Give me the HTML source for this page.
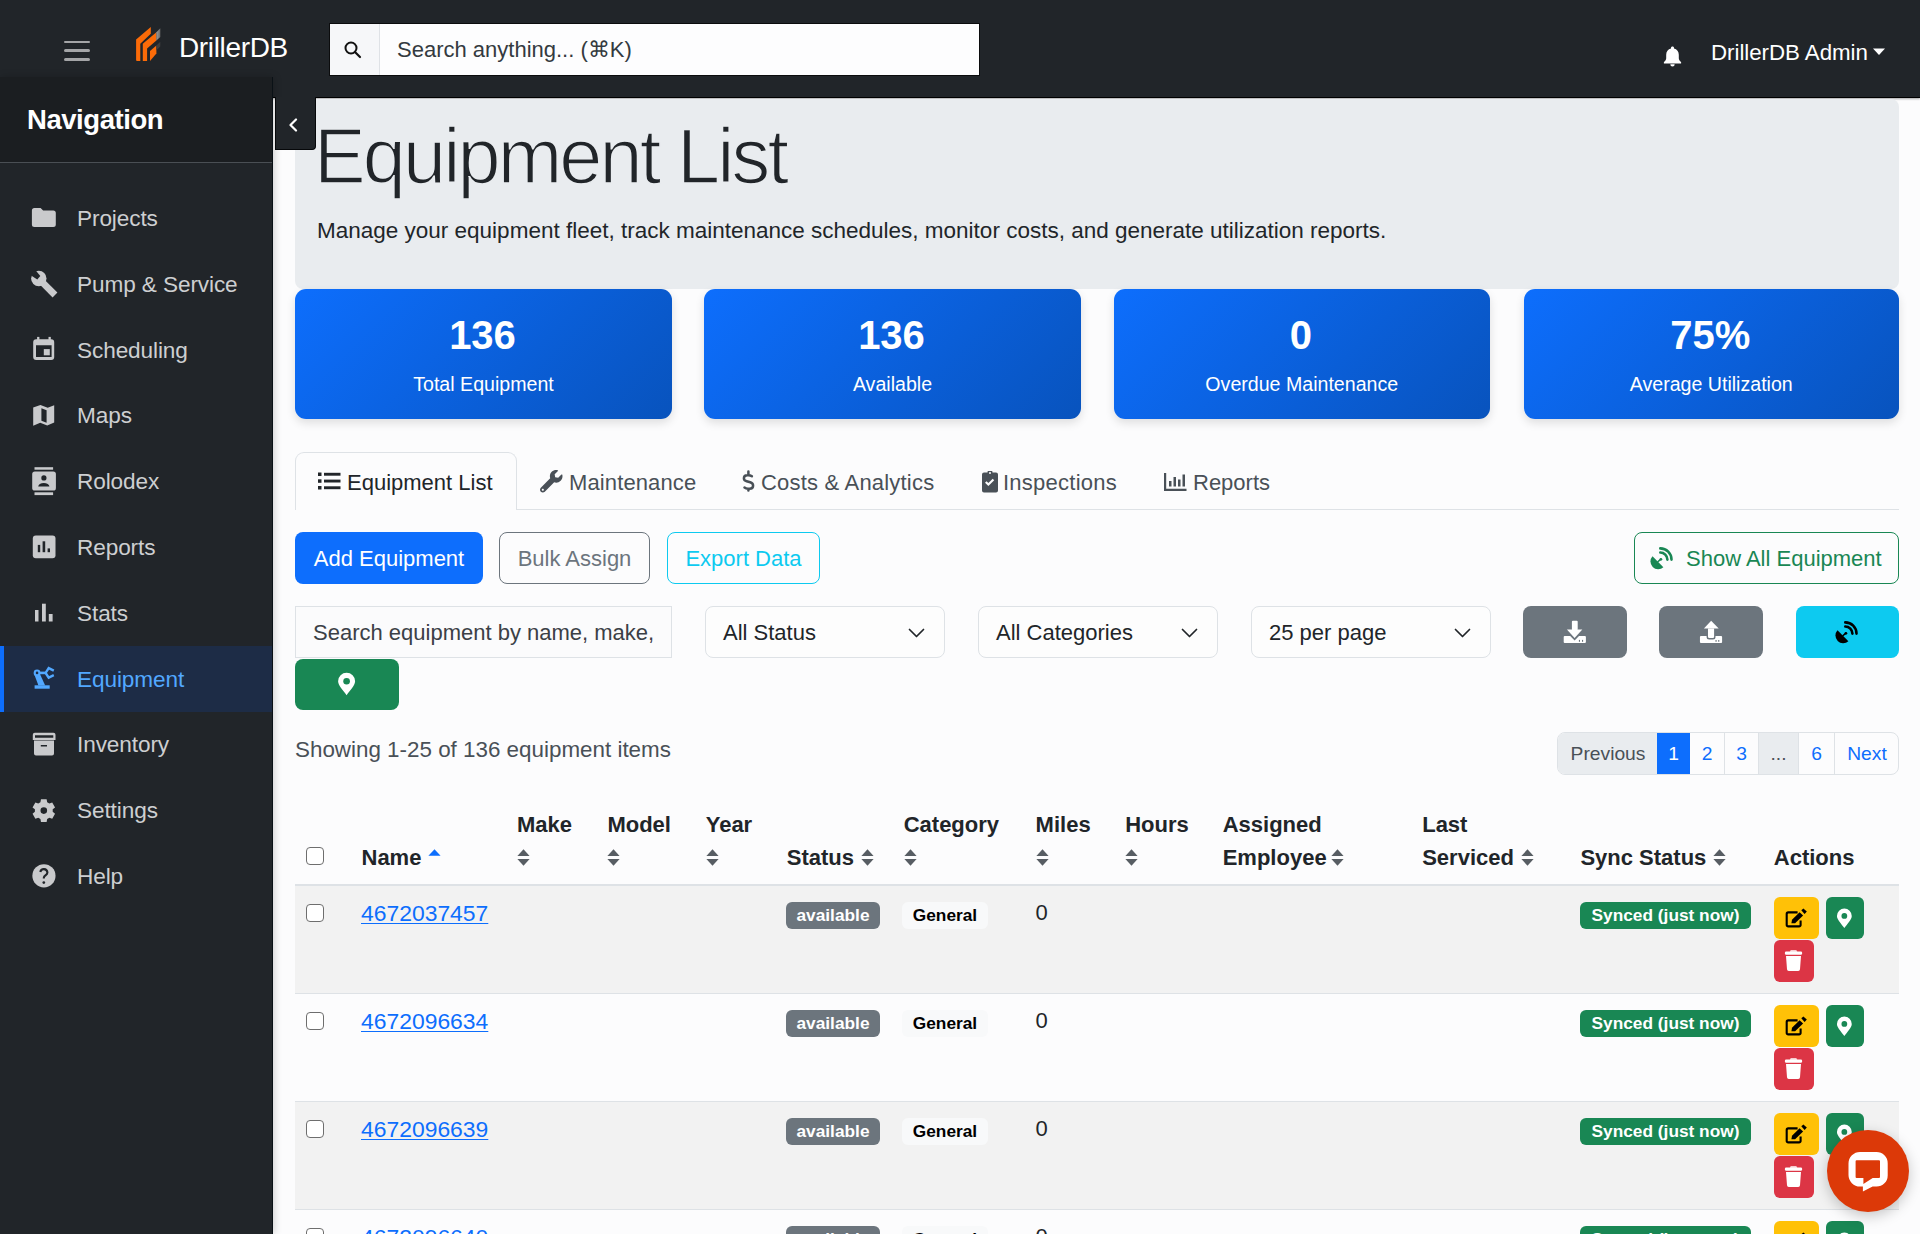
<!DOCTYPE html>
<html><head><meta charset="utf-8">
<style>
*{box-sizing:border-box;margin:0;padding:0}
html,body{width:1920px;height:1234px;overflow:hidden;background:#fcfcfd;font-family:"Liberation Sans",sans-serif;color:#212529}
.abs{position:absolute}
svg{display:block}
/* topbar */
#top{position:absolute;left:0;top:0;width:1920px;height:98px;background:#212529;border-bottom:1px solid #000;box-shadow:0 1px 2px rgba(0,0,0,.35)}
.hb{position:absolute;left:63.5px;width:26.5px;height:2.6px;border-radius:1.5px;background:#a4a5a7}
#brand{position:absolute;left:179px;top:30.5px;font-size:28px;line-height:34px;color:#fff;letter-spacing:-0.35px}
#sg{position:absolute;left:329px;top:23px;width:651px;height:53px;border:1px solid #0b0c0d;background:#fdfdfe}
#sg .ad{position:absolute;left:0;top:0;width:50px;height:51px;background:#f6f7f9;border-right:1px solid #dfe2e6}
#sg .ph{position:absolute;left:67px;top:11px;font-size:22px;line-height:30px;color:#343a40}
#user{position:absolute;left:1711px;top:38px;font-size:22.3px;line-height:30px;color:#fff;letter-spacing:-0.03px}
/* sidebar */
#side{position:absolute;left:0;top:77px;width:273px;height:1157px;background:#212529;border-right:1.5px solid #0a1116;box-shadow:1px 0 8px rgba(0,0,0,.2)}
#sidehead{position:absolute;left:0;top:0;width:271.5px;height:86px;background:#1b1e21;border-bottom:1px solid #4a4f54}
#sidehead div{position:absolute;left:27px;top:25.5px;font-size:27.5px;font-weight:bold;line-height:34px;color:#fff;letter-spacing:-0.45px}
.ni{position:absolute;left:0;width:271.5px;height:66px}
.ni .ic{position:absolute;left:31px;top:21px;width:26px;height:24px}
.ni .tx{position:absolute;left:77px;top:18.5px;font-size:22.6px;letter-spacing:-0.1px;line-height:30px;color:#cdcfd1}
.ni.act{background:#1d2c46;border-left:4px solid #0d6efd}
.ni.act .ic{left:27px}
.ni.act .tx{left:73px;color:#52a8ff}
#tog{position:absolute;left:275px;top:97px;width:41px;height:53px;background:#212529;border:1px solid #06080a;border-top:none;border-radius:0 0 4px 0}
/* jumbotron */
#jumbo{position:absolute;left:295px;top:99px;width:1604px;height:190px;background:#e9ecef;border-radius:8px}
#jt{position:absolute;left:19px;top:11.5px;font-size:77.5px;line-height:90px;letter-spacing:-2.9px;color:#212529;-webkit-text-stroke:1.6px #e9ecef}
#js{position:absolute;left:22px;top:116.5px;font-size:22.5px;line-height:30px;color:#212529}
.card{position:absolute;top:289px;height:130px;border-radius:11px;background:linear-gradient(135deg,#0d6efd 0%,#0853bd 100%);box-shadow:0 4px 10px rgba(0,0,0,.12);color:#fff;text-align:center}
.card .n{position:absolute;left:-2px;right:0;top:22.5px;font-size:40px;font-weight:bold;line-height:46px}
.card .l{position:absolute;left:0;right:0;top:82px;font-size:19.6px;line-height:26px}
/* tabs */
#tabline{position:absolute;left:295px;top:509px;width:1604px;height:1px;background:#dee2e6}
#acttab{position:absolute;left:295px;top:452px;width:222px;height:58px;border:1px solid #dee2e6;border-bottom:none;border-radius:9px 9px 0 0;background:#fcfcfd}
.tab{position:absolute;top:467.5px;font-size:22px;line-height:30px;color:#495057}
.tabic{position:absolute}
/* buttons */
.btn{position:absolute;height:52px;border-radius:8px;font-size:22px;line-height:51.5px;text-align:center;border:1px solid transparent}
.sel{position:absolute;top:606px;width:240px;height:52px;border:1px solid #dee2e6;border-radius:8px;background:#fdfdfd;font-size:22px;line-height:50px;color:#212529}
.sel span{position:absolute;left:17px;top:1px}
.sel svg{position:absolute;top:20.5px}
.th{position:absolute;font-size:22px;font-weight:bold;line-height:30px;color:#212529;white-space:nowrap}
.td{position:absolute;font-size:22px;line-height:30px;color:#212529}
.lk{position:absolute;font-size:22.9px;line-height:30px;color:#0d6efd;text-decoration:underline;text-underline-offset:2px;text-decoration-thickness:1px}
.cb{position:absolute;width:18px;height:18px;border:1px solid #6e6e6e;border-radius:4px;background:#fff}
.bdg{position:absolute;height:27px;border-radius:6px;font-size:17.3px;font-weight:bold;line-height:27px;text-align:center;white-space:nowrap}
.abtn{position:absolute;height:41.5px;border-radius:6px}
</style></head>
<body>
<div id="top">
  <div class="hb" style="top:40.6px"></div><div class="hb" style="top:49.4px"></div><div class="hb" style="top:58.3px"></div>
  <svg class="abs" style="left:120px;top:20px" width="50" height="50" viewBox="120 20 50 50">
    <defs><linearGradient id="g1" x1="0" y1="0" x2="1" y2="0"><stop offset="0" stop-color="#9a9a9a"/><stop offset="1" stop-color="#6a6a6a"/></linearGradient></defs>
    <path d="M136.1 60.2V39.5L150.8 27V33.8L140.3 43.7V60.9H137A1 1 0 0 1 136.1 60.2Z" fill="#fb6b08"/>
    <path d="M142.8 60.9V43.7L156.4 32.2V40.6L147.1 48.4V60.9Z" fill="#fb6b08"/>
    <path d="M156.4 32.2L160.3 28.3V37L156.4 40.6Z" fill="url(#g1)"/>
    <path d="M150 60.9V50.9L156.4 45.6V53.4Z" fill="#fb6b08"/>
    <path d="M156.4 45.6L160.3 41.8V46.5L156.4 50.3Z" fill="#3d3d3d"/>
  </svg>
  <div id="brand">DrillerDB</div>
  <div id="sg"><div class="ad">
    <svg class="abs" style="left:14px;top:17px" width="18" height="18" viewBox="0 0 18 18"><circle cx="7" cy="7" r="5.5" fill="none" stroke="#111" stroke-width="2"/><line x1="11" y1="11" x2="16" y2="16" stroke="#111" stroke-width="2.2" stroke-linecap="round"/></svg>
  </div><div class="ph">Search anything... (⌘K)</div></div>
  <svg class="abs" style="left:1663px;top:45px" width="19" height="22" viewBox="0 0 19 22"><path d="M9.5 1.5c.9 0 1.5.6 1.5 1.4v.6c3 .7 4.8 3.2 4.8 6.3v3.4c0 1.5.9 2.9 2.3 3.8v1.6H.9V17c1.4-.9 2.3-2.3 2.3-3.8V9.8c0-3.1 1.8-5.6 4.8-6.3v-.6c0-.8.6-1.4 1.5-1.4z" fill="#fff"/><path d="M7.3 19.2h4.4a2.2 2.2 0 0 1-4.4 0z" fill="#fff"/></svg>
  <div id="user">DrillerDB Admin</div>
  <svg class="abs" style="left:1873px;top:48px" width="12" height="8" viewBox="0 0 12 8"><polygon points="0,0.5 12,0.5 6,7" fill="#fff"/></svg>
</div>

<div id="side">
  <div id="sidehead"><div>Navigation</div></div>
  <!-- nav items inserted -->
  <div class="ni" style="top:108.4px"><div class="tx">Projects</div></div>
  <div class="ni" style="top:174.2px"><div class="tx">Pump &amp; Service</div></div>
  <div class="ni" style="top:240.0px"><div class="tx">Scheduling</div></div>
  <div class="ni" style="top:305.8px"><div class="tx">Maps</div></div>
  <div class="ni" style="top:371.6px"><div class="tx">Rolodex</div></div>
  <div class="ni" style="top:437.4px"><div class="tx">Reports</div></div>
  <div class="ni" style="top:503.2px"><div class="tx">Stats</div></div>
  <div class="ni act" style="top:569.0px"><div class="tx">Equipment</div></div>
  <div class="ni" style="top:634.8px"><div class="tx">Inventory</div></div>
  <div class="ni" style="top:700.6px"><div class="tx">Settings</div></div>
  <div class="ni" style="top:766.4px"><div class="tx">Help</div></div>
</div>


<div id="jumbo">
  <div id="jt">Equipment List</div>
  <div id="js">Manage your equipment fleet, track maintenance schedules, monitor costs, and generate utilization reports.</div>
</div>
<svg class="abs" style="left:0;top:0" width="273" height="1234" viewBox="0 0 273 1234">
<path fill="#c9cacc" d="M34.4 208.1H40.6L43.1 210.6H53.3A2.5 2.5 0 0 1 55.8 213.1V224.6A2.5 2.5 0 0 1 53.3 227.1H34.4A2.5 2.5 0 0 1 31.9 224.6V210.6A2.5 2.5 0 0 1 34.4 208.1Z"/>
<circle cx="38.8" cy="278.5" r="7.7" fill="#c9cacc"/>
<path fill="#c9cacc" d="M45.3 280.4L57.4 292.6L52.6 297.4L40.5 285.2Z"/>
<path fill="#212529" d="M35.6 270.3L40.3 275.9L37.3 279.5L30.3 275.1Z"/>
<path fill="#c9cacc" fill-rule="evenodd" d="M36.2 339.3H51.2A3 3 0 0 1 54.2 342.3V357A3 3 0 0 1 51.2 360H36.2A3 3 0 0 1 33.2 357V342.3A3 3 0 0 1 36.2 339.3ZM36 345.2V356.9H51.6V345.2Z"/>
<rect x="37.1" y="336.9" width="2.3" height="3" fill="#c9cacc"/><rect x="48.5" y="336.9" width="2.3" height="3" fill="#c9cacc"/>
<rect x="43.8" y="349.1" width="6" height="6.2" fill="#c9cacc"/>
<path fill="#c9cacc" fill-rule="evenodd" d="M33.2 407.5L40.45 405L47.7 407.8L54.2 405.2V422.6L47.2 425.5L40.2 422.8L33.2 425.7ZM41.4 408.2V420.8L46.6 422.8V410.3Z"/>
<rect x="34.5" y="467.2" width="18.6" height="2.5" fill="#c9cacc"/>
<rect x="34.5" y="492.3" width="18.6" height="2.8" fill="#c9cacc"/>
<rect x="32.2" y="471.5" width="23.7" height="19" rx="2.6" fill="#c9cacc"/>
<circle cx="43.9" cy="477.9" r="2.6" fill="#212529"/>
<path fill="#212529" d="M38.2 486.6A5.6 3.6 0 0 1 49.4 486.6Z"/>
<rect x="32.8" y="535.6" width="22.7" height="22.7" rx="3" fill="#c9cacc"/>
<rect x="37.8" y="544.9" width="2.4" height="7.3" fill="#212529"/><rect x="42.6" y="541.3" width="2.6" height="10.9" fill="#212529"/><rect x="47.6" y="548.4" width="2.4" height="3.8" fill="#212529"/>
<rect x="35" y="610" width="3.5" height="11.5" fill="#c9cacc"/><rect x="42" y="603.7" width="3.8" height="17.8" fill="#c9cacc"/><rect x="48.8" y="614" width="3.8" height="7.5" fill="#c9cacc"/>
<g transform="translate(30,662)">
<rect x="4.6" y="23.3" width="15.1" height="3.4" fill="#52a8ff"/>
<path fill="#52a8ff" d="M3.9 11.3L9.6 11.3L15.2 23.4L8.4 23.4Z"/>
<circle cx="7.05" cy="10.9" r="3.4" fill="#52a8ff"/>
<circle cx="7.05" cy="10.9" r="1.3" fill="#1d2c46"/>
<rect x="9.5" y="9.6" width="6" height="2.6" fill="#52a8ff"/>
<polyline points="23.8,8.6 18.7,6.1 15.6,10.9 18.7,15.6 23.8,13.2" fill="none" stroke="#52a8ff" stroke-width="2.4"/>
</g>
<path fill="#c9cacc" fill-rule="evenodd" d="M34.8 732.8H53.5A2 2 0 0 1 55.5 734.8V740H32.8V734.8A2 2 0 0 1 34.8 732.8ZM35 735.2V737.8H53.3V735.2Z"/>
<path fill="#c9cacc" fill-rule="evenodd" d="M34 740.6H54V753.5A2 2 0 0 1 52 755.5H36A2 2 0 0 1 34 753.5ZM40.8 745V746.6H47V745Z"/>
<path fill="#c9cacc" fill-rule="evenodd" d="M40.43 802.26 L40.97 799.25 L46.63 799.25 L47.17 802.26 L49.34 803.51 L52.22 802.47 L55.05 807.38 L52.71 809.35 L52.71 811.85 L55.05 813.82 L52.22 818.73 L49.34 817.69 L47.17 818.94 L46.63 821.95 L40.97 821.95 L40.43 818.94 L38.26 817.69 L35.38 818.73 L32.55 813.82 L34.89 811.85 L34.89 809.35 L32.55 807.38 L35.38 802.47 L38.26 803.51Z M47.10 810.60A3.3 3.3 0 1 0 40.50 810.60A3.3 3.3 0 1 0 47.10 810.60Z"/>
<circle cx="43.95" cy="875.8" r="11.6" fill="#c9cacc"/>
<path d="M40.3 872A3.6 3.6 0 0 1 47.4 872.4C47.4 874.6 45.4 875.2 44.3 876.5C43.9 877 43.8 877.6 43.8 878.6" fill="none" stroke="#212529" stroke-width="2.1"/>
<circle cx="43.8" cy="882.6" r="1.35" fill="#212529"/>
</svg>
<div id="tog"><svg class="abs" style="left:11px;top:21px" width="12" height="14" viewBox="0 0 12 14"><polyline points="9,1.5 3.5,7 9,12.5" fill="none" stroke="#fff" stroke-width="2.2" stroke-linecap="round" stroke-linejoin="round"/></svg></div>
<div class="card" style="left:295px;width:377px"><div class="n">136</div><div class="l">Total Equipment</div></div>
<div class="card" style="left:704px;width:377px"><div class="n">136</div><div class="l">Available</div></div>
<div class="card" style="left:1113.5px;width:376.5px"><div class="n">0</div><div class="l">Overdue Maintenance</div></div>
<div class="card" style="left:1523.5px;width:375.5px"><div class="n">75%</div><div class="l">Average Utilization</div></div>

<!-- tabs -->
<div id="tabline"></div>
<div id="acttab"></div>
<svg class="abs" style="left:318px;top:472px" width="23" height="18" viewBox="0 0 23 18" fill="#212529"><rect x="0" y="0.5" width="3.5" height="3.5"/><rect x="0" y="7.3" width="3.5" height="3.5"/><rect x="0" y="14" width="3.5" height="3.5"/><rect x="6" y="0.8" width="16.5" height="2.9"/><rect x="6" y="7.6" width="16.5" height="2.9"/><rect x="6" y="14.3" width="16.5" height="2.9"/></svg>
<div class="tab" style="left:347px;color:#212529">Equipment List</div>
<svg class="abs" style="left:540px;top:470px" width="22.5" height="22.5" viewBox="0 0 512 512" fill="#495057"><path d="M507.73 109.1c-2.24-9.03-13.54-12.09-20.12-5.51l-74.36 74.36-67.88-11.31-11.31-67.88 74.36-74.36c6.62-6.620 3.43-17.9-5.66-20.16-47.38-11.74-99.55.91-136.58 37.93-39.640 39.64-50.55 97.1-34.05 147.2L18.74 402.76c-24.99 24.99-24.99 65.51 0 90.5 24.99 24.99 65.51 24.99 90.5 0l213.21-213.21c50.12 16.71 107.47 5.68 147.37-34.22 37.07-37.07 49.7-89.32 37.910-136.73zM64 472c-13.25 0-24-10.75-24-24 0-13.26 10.75-24 24-24s24 10.74 24 24c0 13.25-10.75 24-24 24z"/></svg>
<div class="tab" style="left:569px;letter-spacing:0.12px">Maintenance</div>
<svg class="abs" style="left:0;top:0;overflow:visible" width="1" height="1"><path d="M751.9 476.3C750.8 475.5 749.6 475.2 748.3 475.2H747.3C745.3 475.2 743.9 476.5 743.9 478.2C743.9 479.9 745 480.8 746.7 481.3L750.2 482.3C752.1 482.9 753.1 484.1 753.1 485.7C753.1 487.5 751.6 488.7 749.5 488.7H748C746.5 488.7 745.4 488.3 744.5 487.6M748.4 471.5V475.2M748.4 488.7V490.6" fill="none" stroke="#495057" stroke-width="2.5" stroke-linecap="round" stroke-linejoin="round"/></svg>
<div class="tab" style="left:761px;letter-spacing:0.2px">Costs &amp; Analytics</div>
<svg class="abs" style="left:981px;top:471px" width="18" height="22" viewBox="0 0 18 22" fill="#495057"><path d="M6.5 1.5a2.5 2.5 0 0 1 5 0H15a2 2 0 0 1 2 2V19.5a2 2 0 0 1-2 2H3a2 2 0 0 1-2-2V3.5a2 2 0 0 1 2-2zm2.5-.4a1 1 0 1 0 0 2 1 1 0 0 0 0-2zM13.2 9.3l-1.5-1.5-4.3 4.3-1.9-1.9L4 11.7l3.4 3.4z" fill-rule="evenodd"/></svg>
<div class="tab" style="left:1003px;letter-spacing:0.25px">Inspections</div>
<svg class="abs" style="left:1164px;top:473px" width="23" height="18" viewBox="0 0 23 18" fill="#495057"><path d="M0 0h2.2v15.8H22.5V18H0zM5 8h2.5v5.5H5zM9.5 4h2.5v9.5H9.5zM14 6.5h2.5v7H14zM18.5 1.5H21v12h-2.5z"/></svg>
<div class="tab" style="left:1193px">Reports</div>

<!-- action buttons -->
<div class="btn" style="left:295px;top:532px;width:188px;background:#0d6efd;color:#fff">Add Equipment</div>
<div class="btn" style="left:499px;top:532px;width:151px;border-color:#6c757d;color:#6c757d">Bulk Assign</div>
<div class="btn" style="left:667px;top:532px;width:153px;border-color:#0dcaf0;color:#0dcaf0">Export Data</div>
<div class="btn" style="left:1634px;top:532px;width:265px;border-color:#198754;color:#198754;text-align:left;padding-left:51px">Show All Equipment</div>
<svg class="abs" style="left:1645px;top:540px" width="35" height="35" viewBox="0 0 35 35"><path d="M7.5 16.2A7.75 7.75 0 0 0 18.4 27.2Z" fill="#198754"/><line x1="12.5" y1="22" x2="15.9" y2="19.2" stroke="#198754" stroke-width="1.6"/><circle cx="15.9" cy="19.3" r="1.35" fill="#198754"/><path d="M15.3 12.5A7.1 7.1 0 0 1 22.4 19.6M15.3 8.4A11.2 11.2 0 0 1 26.5 19.6" fill="none" stroke="#198754" stroke-width="2.6" stroke-linecap="round"/></svg>

<!-- filters -->
<div class="abs" style="left:295px;top:606px;width:377px;height:52px;border:1px solid #dee2e6;background:#fbfbfc;font-size:22px;line-height:52.5px;color:#3b4046;padding-left:17px;white-space:nowrap;overflow:hidden">Search equipment by name, make,</div>
<div class="sel" style="left:705px"><span>All Status</span><svg style="left:202px" width="17" height="11" viewBox="0 0 17 11"><polyline points="1.5,1.5 8.5,8.5 15.5,1.5" fill="none" stroke="#212529" stroke-width="1.7" stroke-linecap="round" stroke-linejoin="round"/></svg></div>
<div class="sel" style="left:978px"><span>All Categories</span><svg style="left:202px" width="17" height="11" viewBox="0 0 17 11"><polyline points="1.5,1.5 8.5,8.5 15.5,1.5" fill="none" stroke="#212529" stroke-width="1.7" stroke-linecap="round" stroke-linejoin="round"/></svg></div>
<div class="sel" style="left:1251px"><span>25 per page</span><svg style="left:202px" width="17" height="11" viewBox="0 0 17 11"><polyline points="1.5,1.5 8.5,8.5 15.5,1.5" fill="none" stroke="#212529" stroke-width="1.7" stroke-linecap="round" stroke-linejoin="round"/></svg></div>
<div class="btn" style="left:1523px;top:606px;width:104px;background:#6c757d"></div>
<svg class="abs" style="left:1557px;top:614px" width="35" height="35" viewBox="0 0 35 35" fill="#fff"><rect x="14.9" y="6.8" width="5.8" height="9.5" rx="1"/><path d="M9.9 15.5H25.3L17.6 24Z"/><path d="M7.7 22H13.2L17.6 26.4L22 22H27.9A1 1 0 0 1 28.9 23V28.1A1 1 0 0 1 27.9 29.1H7.7A1 1 0 0 1 6.7 28.1V23A1 1 0 0 1 7.7 22Z"/><rect x="21.9" y="25.9" width="1.1" height="1.9" fill="#6c757d"/><rect x="25" y="25.9" width="1.1" height="1.9" fill="#6c757d"/></svg>
<div class="btn" style="left:1659px;top:606px;width:104px;background:#6c757d"></div>
<svg class="abs" style="left:1693px;top:614px" width="35" height="35" viewBox="0 0 35 35" fill="#fff"><path d="M18.15 6.7L25.7 14.6H10.9Z"/><path d="M15 14.4H21.1V22.7A1.2 1.2 0 0 1 19.9 23.9H16.2A1.2 1.2 0 0 1 15 22.7Z"/><path d="M7.95 22H13.6V23A2.5 2.5 0 0 0 16.1 25.5H20A2.5 2.5 0 0 0 22.5 23V22H28.1A1 1 0 0 1 29.1 23V28.1A1 1 0 0 1 28.1 29.1H7.95A1 1 0 0 1 6.95 28.1V23A1 1 0 0 1 7.95 22Z"/><rect x="22.5" y="26" width="1.1" height="1.8" fill="#6c757d"/><rect x="25.2" y="26" width="1.1" height="1.8" fill="#6c757d"/></svg>
<div class="btn" style="left:1796px;top:606px;width:103px;background:#0dcaf0"></div>
<svg class="abs" style="left:1830px;top:614px" width="35" height="35" viewBox="0 0 35 35"><path d="M7.5 16.2A7.75 7.75 0 0 0 18.4 27.2Z" fill="#000"/><line x1="12.5" y1="22" x2="15.9" y2="19.2" stroke="#000" stroke-width="1.6"/><circle cx="15.9" cy="19.3" r="1.35" fill="#000"/><path d="M15.3 12.5A7.1 7.1 0 0 1 22.4 19.6M15.3 8.4A11.2 11.2 0 0 1 26.5 19.6" fill="none" stroke="#000" stroke-width="2.6" stroke-linecap="round"/></svg>
<div class="btn" style="left:295px;top:659px;width:104px;height:51px;background:#198754"></div>
<svg class="abs" style="left:0;top:0;overflow:visible" width="1" height="1"><path fill="#fff" d="M338.10 681.30A8.5 8.5 0 0 1 355.10 681.30C355.10 685.55 350.00 690.22 346.60 695.24C343.20 690.22 338.10 685.55 338.10 681.30Z"/><circle cx="346.6" cy="681.3" r="3.31" fill="#198754"/></svg>

<!-- showing + pagination -->
<div class="abs" style="left:295px;top:735px;font-size:22.4px;line-height:30px;color:#495057">Showing 1-25 of 136 equipment items</div>
<div class="abs" id="pg" style="left:1557px;top:732px;width:342px;height:43px;border:1px solid #dee2e6;border-radius:8px;overflow:hidden;font-size:19.25px;line-height:41px;color:#0d6efd">
  <div class="abs" style="left:0;top:0;width:100px;height:41px;background:#e9ecef;color:#495057;text-align:center">Previous</div>
  <div class="abs" style="left:99px;top:0;width:33px;height:41px;background:#0d6efd;color:#fff;text-align:center">1</div>
  <div class="abs" style="left:132px;top:0;width:35px;height:41px;border-right:1px solid #dee2e6;text-align:center">2</div>
  <div class="abs" style="left:167px;top:0;width:34px;height:41px;border-right:1px solid #dee2e6;text-align:center">3</div>
  <div class="abs" style="left:201px;top:0;width:40px;height:41px;background:#e9ecef;border-right:1px solid #dee2e6;color:#495057;text-align:center">...</div>
  <div class="abs" style="left:241px;top:0;width:36px;height:41px;border-right:1px solid #dee2e6;text-align:center">6</div>
  <div class="abs" style="left:277px;top:0;width:64px;height:41px;text-align:center">Next</div>
</div>

<div class="cb" style="left:306px;top:847px"></div>
<div class="th" style="left:361.5px;top:842.8px">Name</div>
<svg class="abs" style="left:428px;top:849px" width="13" height="7" viewBox="0 0 13 7" fill="#0d6efd"><path d="M6.5 0.3L12.6 6.8H0.4z"/></svg>
<div class="th" style="left:517px;top:809.6px">Make</div>
<svg class="abs" style="left:517px;top:848.5px" width="13" height="17" viewBox="0 0 13 17" fill="#575d63"><path d="M6.5 0.3L12.6 6.9H0.4z"/><path d="M6.5 16.7L12.6 10.1H0.4z"/></svg>
<div class="th" style="left:607.4px;top:809.6px">Model</div>
<svg class="abs" style="left:607px;top:848.5px" width="13" height="17" viewBox="0 0 13 17" fill="#575d63"><path d="M6.5 0.3L12.6 6.9H0.4z"/><path d="M6.5 16.7L12.6 10.1H0.4z"/></svg>
<div class="th" style="left:705.7px;top:809.6px">Year</div>
<svg class="abs" style="left:706px;top:848.5px" width="13" height="17" viewBox="0 0 13 17" fill="#575d63"><path d="M6.5 0.3L12.6 6.9H0.4z"/><path d="M6.5 16.7L12.6 10.1H0.4z"/></svg>
<div class="th" style="left:903.7px;top:809.6px">Category</div>
<svg class="abs" style="left:904px;top:848.5px" width="13" height="17" viewBox="0 0 13 17" fill="#575d63"><path d="M6.5 0.3L12.6 6.9H0.4z"/><path d="M6.5 16.7L12.6 10.1H0.4z"/></svg>
<div class="th" style="left:1035.6px;top:809.6px">Miles</div>
<svg class="abs" style="left:1036px;top:848.5px" width="13" height="17" viewBox="0 0 13 17" fill="#575d63"><path d="M6.5 0.3L12.6 6.9H0.4z"/><path d="M6.5 16.7L12.6 10.1H0.4z"/></svg>
<div class="th" style="left:1125.2px;top:809.6px">Hours</div>
<svg class="abs" style="left:1125px;top:848.5px" width="13" height="17" viewBox="0 0 13 17" fill="#575d63"><path d="M6.5 0.3L12.6 6.9H0.4z"/><path d="M6.5 16.7L12.6 10.1H0.4z"/></svg>
<div class="th" style="left:786.8px;top:842.8px">Status</div>
<svg class="abs" style="left:861px;top:848.5px" width="13" height="17" viewBox="0 0 13 17" fill="#575d63"><path d="M6.5 0.3L12.6 6.9H0.4z"/><path d="M6.5 16.7L12.6 10.1H0.4z"/></svg>
<div class="th" style="left:1222.7px;top:809.6px">Assigned</div>
<div class="th" style="left:1222.7px;top:842.8px">Employee</div>
<svg class="abs" style="left:1331px;top:848.5px" width="13" height="17" viewBox="0 0 13 17" fill="#575d63"><path d="M6.5 0.3L12.6 6.9H0.4z"/><path d="M6.5 16.7L12.6 10.1H0.4z"/></svg>
<div class="th" style="left:1422.2px;top:809.6px">Last</div>
<div class="th" style="left:1422.2px;top:842.8px">Serviced</div>
<svg class="abs" style="left:1521px;top:848.5px" width="13" height="17" viewBox="0 0 13 17" fill="#575d63"><path d="M6.5 0.3L12.6 6.9H0.4z"/><path d="M6.5 16.7L12.6 10.1H0.4z"/></svg>
<div class="th" style="left:1580.4px;top:842.8px">Sync Status</div>
<svg class="abs" style="left:1713px;top:848.5px" width="13" height="17" viewBox="0 0 13 17" fill="#575d63"><path d="M6.5 0.3L12.6 6.9H0.4z"/><path d="M6.5 16.7L12.6 10.1H0.4z"/></svg>
<div class="th" style="left:1773.8px;top:842.8px">Actions</div>
<div class="abs" style="left:295px;top:884px;width:1604px;height:2px;background:#dee2e6"></div>
<div class="abs" style="left:295px;top:886px;width:1604px;height:107px;background:#f2f2f2"></div>
<div class="abs" style="left:295px;top:993px;width:1604px;height:1px;background:#dee2e6"></div>
<div class="cb" style="left:306px;top:904px"></div>
<div class="lk" style="left:361px;top:898.4px">4672037457</div>
<div class="bdg" style="left:786px;top:902px;width:94px;background:#6c757d;color:#fff">available</div>
<div class="bdg" style="left:902px;top:902px;width:86px;background:#f8f9fa;color:#000">General</div>
<div class="td" style="left:1035.6px;top:897.7px">0</div>
<div class="bdg" style="left:1580px;top:902px;width:171px;background:#198754;color:#fff">Synced (just now)</div>
<div class="abtn" style="left:1773.5px;top:897px;width:45px;background:#ffc107"><svg class="abs" style="left:4.5px;top:3px" width="36" height="36" viewBox="0 0 36 36"><path d="M19.6 12.4H10.2A1.5 1.5 0 0 0 8.7 13.9V24.9A1.5 1.5 0 0 0 10.2 26.4H21.1A1.5 1.5 0 0 0 22.6 24.9V20.6" fill="none" stroke="#000" stroke-width="2.1"/><path d="M13.4 23.3L14 19.8L21.6 12.2L25.1 15.6L17.1 23.3Z"/><path d="M23.3 10.2L25.4 8.4L28.8 11.6L26.6 13.9Z"/></svg></div>
<div class="abtn" style="left:1825.8px;top:897px;width:38px;background:#198754"><svg class="abs" style="left:0;top:0;overflow:visible" width="1" height="1"><path fill="#fff" d="M10.95 18.90A7.4 7.4 0 0 1 25.75 18.90C25.75 22.60 21.31 26.67 18.35 31.04C15.39 26.67 10.95 22.60 10.95 18.90Z"/><circle cx="18.35" cy="18.9" r="2.89" fill="#198754"/></svg></div>
<div class="abtn" style="left:1773.5px;top:940px;width:40px;background:#dc3545"><svg class="abs" style="left:2.5px;top:2px" width="36" height="36" viewBox="0 0 36 36" fill="#fff"><rect x="8.9" y="9.5" width="17.2" height="3.3" rx="1.2"/><path d="M13.8 9.8L14.7 8.2H20.4L21.3 9.8Z"/><path d="M10 14H25L24 27.2A1.8 1.8 0 0 1 22.2 28.9H12.8A1.8 1.8 0 0 1 11 27.2Z"/></svg></div>
<div class="abs" style="left:295px;top:994px;width:1604px;height:107px;background:#fcfcfd"></div>
<div class="abs" style="left:295px;top:1101px;width:1604px;height:1px;background:#dee2e6"></div>
<div class="cb" style="left:306px;top:1012px"></div>
<div class="lk" style="left:361px;top:1006.4px">4672096634</div>
<div class="bdg" style="left:786px;top:1010px;width:94px;background:#6c757d;color:#fff">available</div>
<div class="bdg" style="left:902px;top:1010px;width:86px;background:#f8f9fa;color:#000">General</div>
<div class="td" style="left:1035.6px;top:1005.7px">0</div>
<div class="bdg" style="left:1580px;top:1010px;width:171px;background:#198754;color:#fff">Synced (just now)</div>
<div class="abtn" style="left:1773.5px;top:1005px;width:45px;background:#ffc107"><svg class="abs" style="left:4.5px;top:3px" width="36" height="36" viewBox="0 0 36 36"><path d="M19.6 12.4H10.2A1.5 1.5 0 0 0 8.7 13.9V24.9A1.5 1.5 0 0 0 10.2 26.4H21.1A1.5 1.5 0 0 0 22.6 24.9V20.6" fill="none" stroke="#000" stroke-width="2.1"/><path d="M13.4 23.3L14 19.8L21.6 12.2L25.1 15.6L17.1 23.3Z"/><path d="M23.3 10.2L25.4 8.4L28.8 11.6L26.6 13.9Z"/></svg></div>
<div class="abtn" style="left:1825.8px;top:1005px;width:38px;background:#198754"><svg class="abs" style="left:0;top:0;overflow:visible" width="1" height="1"><path fill="#fff" d="M10.95 18.90A7.4 7.4 0 0 1 25.75 18.90C25.75 22.60 21.31 26.67 18.35 31.04C15.39 26.67 10.95 22.60 10.95 18.90Z"/><circle cx="18.35" cy="18.9" r="2.89" fill="#198754"/></svg></div>
<div class="abtn" style="left:1773.5px;top:1048px;width:40px;background:#dc3545"><svg class="abs" style="left:2.5px;top:2px" width="36" height="36" viewBox="0 0 36 36" fill="#fff"><rect x="8.9" y="9.5" width="17.2" height="3.3" rx="1.2"/><path d="M13.8 9.8L14.7 8.2H20.4L21.3 9.8Z"/><path d="M10 14H25L24 27.2A1.8 1.8 0 0 1 22.2 28.9H12.8A1.8 1.8 0 0 1 11 27.2Z"/></svg></div>
<div class="abs" style="left:295px;top:1102px;width:1604px;height:107px;background:#f2f2f2"></div>
<div class="abs" style="left:295px;top:1209px;width:1604px;height:1px;background:#dee2e6"></div>
<div class="cb" style="left:306px;top:1120px"></div>
<div class="lk" style="left:361px;top:1114.4px">4672096639</div>
<div class="bdg" style="left:786px;top:1118px;width:94px;background:#6c757d;color:#fff">available</div>
<div class="bdg" style="left:902px;top:1118px;width:86px;background:#f8f9fa;color:#000">General</div>
<div class="td" style="left:1035.6px;top:1113.7px">0</div>
<div class="bdg" style="left:1580px;top:1118px;width:171px;background:#198754;color:#fff">Synced (just now)</div>
<div class="abtn" style="left:1773.5px;top:1113px;width:45px;background:#ffc107"><svg class="abs" style="left:4.5px;top:3px" width="36" height="36" viewBox="0 0 36 36"><path d="M19.6 12.4H10.2A1.5 1.5 0 0 0 8.7 13.9V24.9A1.5 1.5 0 0 0 10.2 26.4H21.1A1.5 1.5 0 0 0 22.6 24.9V20.6" fill="none" stroke="#000" stroke-width="2.1"/><path d="M13.4 23.3L14 19.8L21.6 12.2L25.1 15.6L17.1 23.3Z"/><path d="M23.3 10.2L25.4 8.4L28.8 11.6L26.6 13.9Z"/></svg></div>
<div class="abtn" style="left:1825.8px;top:1113px;width:38px;background:#198754"><svg class="abs" style="left:0;top:0;overflow:visible" width="1" height="1"><path fill="#fff" d="M10.95 18.90A7.4 7.4 0 0 1 25.75 18.90C25.75 22.60 21.31 26.67 18.35 31.04C15.39 26.67 10.95 22.60 10.95 18.90Z"/><circle cx="18.35" cy="18.9" r="2.89" fill="#198754"/></svg></div>
<div class="abtn" style="left:1773.5px;top:1156px;width:40px;background:#dc3545"><svg class="abs" style="left:2.5px;top:2px" width="36" height="36" viewBox="0 0 36 36" fill="#fff"><rect x="8.9" y="9.5" width="17.2" height="3.3" rx="1.2"/><path d="M13.8 9.8L14.7 8.2H20.4L21.3 9.8Z"/><path d="M10 14H25L24 27.2A1.8 1.8 0 0 1 22.2 28.9H12.8A1.8 1.8 0 0 1 11 27.2Z"/></svg></div>
<div class="abs" style="left:295px;top:1210px;width:1604px;height:107px;background:#fcfcfd"></div>
<div class="abs" style="left:295px;top:1317px;width:1604px;height:1px;background:#dee2e6"></div>
<div class="cb" style="left:306px;top:1228px"></div>
<div class="lk" style="left:361px;top:1222.4px">4672096640</div>
<div class="bdg" style="left:786px;top:1226px;width:94px;background:#6c757d;color:#fff">available</div>
<div class="bdg" style="left:902px;top:1226px;width:86px;background:#f8f9fa;color:#000">General</div>
<div class="td" style="left:1035.6px;top:1221.7px">0</div>
<div class="bdg" style="left:1580px;top:1226px;width:171px;background:#198754;color:#fff">Synced (just now)</div>
<div class="abtn" style="left:1773.5px;top:1221px;width:45px;background:#ffc107"><svg class="abs" style="left:4.5px;top:3px" width="36" height="36" viewBox="0 0 36 36"><path d="M19.6 12.4H10.2A1.5 1.5 0 0 0 8.7 13.9V24.9A1.5 1.5 0 0 0 10.2 26.4H21.1A1.5 1.5 0 0 0 22.6 24.9V20.6" fill="none" stroke="#000" stroke-width="2.1"/><path d="M13.4 23.3L14 19.8L21.6 12.2L25.1 15.6L17.1 23.3Z"/><path d="M23.3 10.2L25.4 8.4L28.8 11.6L26.6 13.9Z"/></svg></div>
<div class="abtn" style="left:1825.8px;top:1221px;width:38px;background:#198754"><svg class="abs" style="left:0;top:0;overflow:visible" width="1" height="1"><path fill="#fff" d="M10.95 18.90A7.4 7.4 0 0 1 25.75 18.90C25.75 22.60 21.31 26.67 18.35 31.04C15.39 26.67 10.95 22.60 10.95 18.90Z"/><circle cx="18.35" cy="18.9" r="2.89" fill="#198754"/></svg></div>
<div class="abtn" style="left:1773.5px;top:1264px;width:40px;background:#dc3545"><svg class="abs" style="left:2.5px;top:2px" width="36" height="36" viewBox="0 0 36 36" fill="#fff"><rect x="8.9" y="9.5" width="17.2" height="3.3" rx="1.2"/><path d="M13.8 9.8L14.7 8.2H20.4L21.3 9.8Z"/><path d="M10 14H25L24 27.2A1.8 1.8 0 0 1 22.2 28.9H12.8A1.8 1.8 0 0 1 11 27.2Z"/></svg></div>

<!-- chat -->
<div class="abs" style="left:1827px;top:1130px;width:82px;height:82px;border-radius:50%;background:#dc3908;box-shadow:0 4px 14px rgba(0,0,0,.22)"></div>
<svg class="abs" style="left:1840px;top:1145px" width="56" height="56" viewBox="1840 1145 56 56"><path fill="#fff" d="M1860 1152H1876.5A11.2 11.2 0 0 1 1887.7 1163.2V1175.4A11.2 11.2 0 0 1 1876.5 1186.6H1872.6L1862.9 1191.4V1186.6H1860A11.5 11.5 0 0 1 1848.5 1175.1V1163.5A11.5 11.5 0 0 1 1860 1152Z"/><path fill="#dc3908" d="M1856.6 1160.3H1879A1 1 0 0 1 1880 1161.3V1176.9A1 1 0 0 1 1879 1177.9H1872.7L1863.4 1184V1177.9H1856.6A1 1 0 0 1 1855.6 1176.9V1161.3A1 1 0 0 1 1856.6 1160.3Z"/></svg>

</body></html>
